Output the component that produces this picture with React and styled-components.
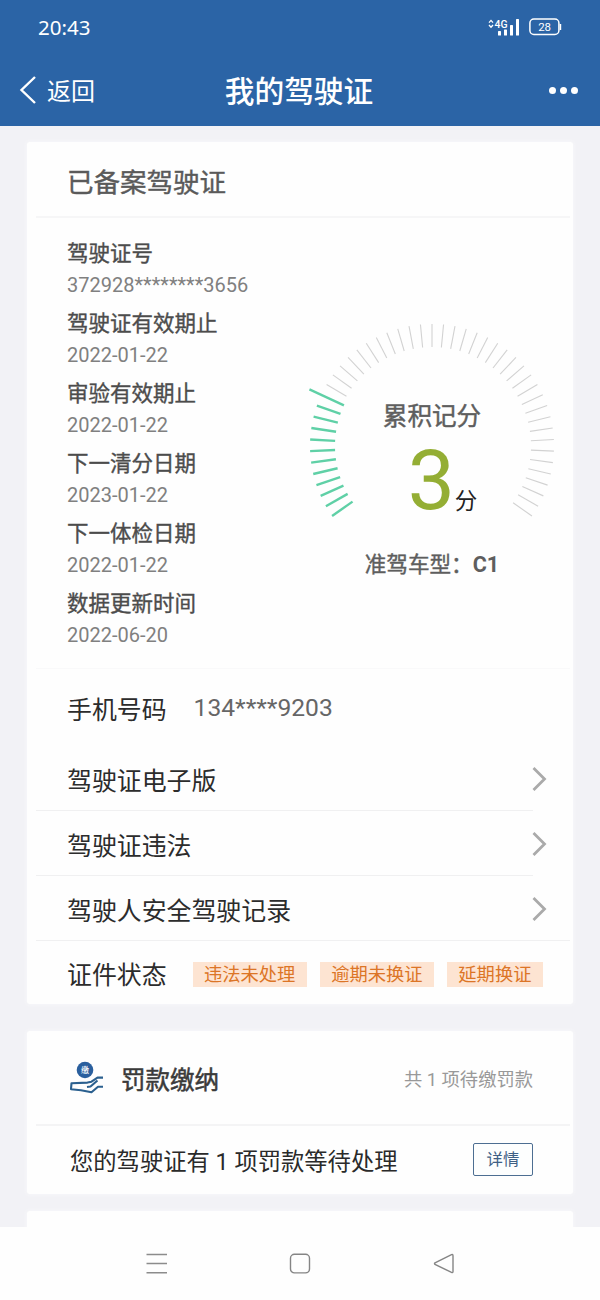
import React from 'react';
import styled, { createGlobalStyle } from 'styled-components';

const GlobalStyle = createGlobalStyle`
  * {
    box-sizing: border-box;
  }
  body {
    margin: 0;
    background: #f2f2f6;
    font-family: Roboto, "Noto Sans CJK SC", sans-serif;
  }
`;

const Screen = styled.div`
  display: flex;
  flex-direction: column;
  width: 600px;
  height: 1300px;
  overflow: hidden;
  background: #f2f2f6;
`;

const Header = styled.header`
  height: 126px;
  flex: none;
  background: #2b64a6;
  color: #fff;
`;

const StatusBar = styled.div`
  display: flex;
  align-items: center;
  justify-content: space-between;
  height: 54px;
  padding: 0 38px;
`;

const Time = styled.span`
  font-family: "Noto Sans", sans-serif;
  font-size: 20.5px;
  line-height: 24px;
`;

const StatusIcons = styled.div`
  display: flex;
  align-items: center;
  gap: 9px;
`;

const TitleBar = styled.div`
  display: grid;
  grid-template-columns: 1fr auto 1fr;
  align-items: center;
  height: 72px;
  padding: 0 22px 0 19px;
`;

const Back = styled.div`
  display: flex;
  align-items: center;
  gap: 10px;
  font-size: 24px;
  line-height: 36px;
  span {
    padding-top: 3px;
  }
`;

const PageTitle = styled.h1`
  margin: 0;
  padding: 4px 0 0 1px;
  font-size: 29.7px;
  line-height: 40px;
  font-weight: 500;
`;

const More = styled.div`
  display: flex;
  justify-content: flex-end;
  gap: 4px;
`;

const Dot = styled.i`
  width: 7px;
  height: 7px;
  border-radius: 50%;
  background: #fff;
`;

const Content = styled.main`
  flex: 1;
  min-height: 0;
  overflow: hidden;
  padding: 16px 27px 0;
`;

const Card = styled.section`
  height: ${(p) => p.$height}px;
  margin-bottom: ${(p) => p.$gap || 0}px;
  background: #fefefe;
  border-radius: 3px;
  box-shadow: 0 0 4px #fafafc;
`;

const CardTitle = styled.h2`
  display: flex;
  align-items: center;
  height: 76px;
  margin: 0 3px 0 9px;
  padding: 2px 0 0 31px;
  border-bottom: 2px solid #f6f6f7;
  color: #5a5a5a;
  font-size: 26.5px;
  font-weight: 400;
  -webkit-text-stroke: 0.4px #5a5a5a;
`;

const Summary = styled.div`
  display: flex;
  height: 450px;
  margin: 0 3px 0 9px;
  padding: 19px 0 0 31px;
`;

const InfoList = styled.dl`
  flex: none;
  width: 233px;
  margin: 0;
`;

const InfoLabel = styled.dt`
  height: 33px;
  color: #4c4c4c;
  font-size: 21.5px;
  line-height: 34px;
  -webkit-text-stroke: 0.35px #4c4c4c;
  white-space: nowrap;
`;

const InfoValue = styled.dd`
  height: 37px;
  margin: 0;
  color: #808080;
  font-size: 20px;
  line-height: 31px;
`;

const ScorePanel = styled.div`
  display: flex;
  flex: none;
  flex-direction: column;
  align-items: center;
  width: 264px;
  padding-top: 67px;
`;

const Gauge = styled.div`
  display: grid;
  width: 264px;
  height: 230px;
  & > * {
    grid-area: 1 / 1;
  }
`;

const ScoreText = styled.div`
  display: flex;
  flex-direction: column;
  align-items: center;
  padding-top: 95px;
`;

const ScoreLabel = styled.div`
  color: #5e5e5e;
  font-size: 24.6px;
  line-height: 36px;
  -webkit-text-stroke: 0.45px #5e5e5e;
`;

const Score = styled.div`
  display: flex;
  align-items: baseline;
  padding-left: 21px;
  color: #94ae34;
  font-size: 84px;
  line-height: 92px;
`;

const Unit = styled.span`
  color: #222;
  font-size: 22.5px;
  line-height: 30px;
`;

const VehicleType = styled.div`
  margin-top: 14px;
  color: #5e5e5e;
  font-size: 21.6px;
  line-height: 34px;
  -webkit-text-stroke: 0.4px #5e5e5e;
  white-space: nowrap;
  b {
    font-weight: 700;
    -webkit-text-stroke: 0;
  }
`;

const Row = styled.div`
  display: flex;
  align-items: center;
  height: ${(p) => p.$height || 65}px;
  margin: 0 ${(p) => (p.$short ? 40 : 3)}px 0 9px;
  padding-left: 31px;
  border-bottom: ${(p) => (p.$last ? 0 : 1)}px solid #f0f0f1;
  color: #2c2c2c;
  font-size: 24.9px;
  white-space: nowrap;
`;

const PhoneRow = styled(Row)`
  border-top: 1px solid #f9f9fa;
`;

const RowText = styled.span`
  flex: 1;
  padding-top: 1px;
`;

const Chevron = styled.svg`
  flex: none;
  margin: 2px ${(p) => (p.$short ? -14 : 23)}px 0 0;
`;

const Phone = styled.span`
  margin-left: 27px;
  color: #666;
  font-size: 24.6px;
`;

const Tags = styled.div`
  display: flex;
  gap: 13px;
  margin: 3px 0 0 26px;
`;

const Tag = styled.span`
  height: 25px;
  padding: 0 11.4px;
  background: #fde4d2;
  color: #dc7526;
  font-size: 18.3px;
  line-height: 26px;
`;

const FineHeader = styled.div`
  display: flex;
  align-items: center;
  height: 95px;
  margin: 0 3px 0 9px;
  padding: 0 37px 0 33px;
  border-bottom: 2px solid #f4f4f5;
`;

const FineTitle = styled.h2`
  flex: 1;
  margin: 1px 0 0 16px;
  color: #3a3a3a;
  font-size: 24.5px;
  font-weight: 400;
  -webkit-text-stroke: 0.5px #3a3a3a;
`;

const FineCount = styled.span`
  color: #999;
  font-size: 18.3px;
`;

const FineRow = styled.div`
  display: flex;
  align-items: center;
  justify-content: space-between;
  height: 67px;
  padding: 0 40px 0 43px;
  color: #2a2a2a;
  font-size: 23.3px;
`;

const DetailButton = styled.button`
  width: 60px;
  height: 33px;
  padding: 0;
  border: 1px solid #4d6e92;
  border-radius: 2px;
  background: #fdfefe;
  color: #3f6085;
  font-family: inherit;
  font-size: 16.4px;
  line-height: 31px;
`;

const NavBar = styled.nav`
  display: flex;
  flex: none;
  align-items: center;
  justify-content: center;
  gap: 122px;
  height: 73px;
  background: #fefefe;
`;

const infos = [
  ['驾驶证号', '372928********3656'],
  ['驾驶证有效期止', '2022-01-22'],
  ['审验有效期止', '2022-01-22'],
  ['下一清分日期', '2023-01-22'],
  ['下一体检日期', '2022-01-22'],
  ['数据更新时间', '2022-06-20'],
];

const menus = ['驾驶证电子版', '驾驶证违法', '驾驶人安全驾驶记录'];

const states = ['违法未处理', '逾期未换证', '延期换证'];

const TICKS = 47;
const ACTIVE = 12;

// 47 ticks over a 250 degree arc, the last active one sticks out
const GaugeTicks = () => (
  <svg width="264" height="230" viewBox="0 0 264 230" overflow="visible">
    {Array.from({ length: TICKS }, (_, i) => {
      const a = ((-215 + (i * 250) / (TICKS - 1)) * Math.PI) / 180;
      const active = i < ACTIVE;
      const outer = i === ACTIVE - 1 ? 135 : 122;
      const inner = active ? 97 : 99;
      return (
        <line
          key={i}
          x1={132 + Math.cos(a) * inner}
          y1={142 + Math.sin(a) * inner}
          x2={132 + Math.cos(a) * outer}
          y2={142 + Math.sin(a) * outer}
          stroke={active ? '#5fd0a6' : '#d2d2d2'}
          strokeWidth={active ? 2.4 : 1.1}
        />
      );
    })}
  </svg>
);

const SignalIcon = () => (
  <svg width="32" height="19" viewBox="0 0 32 19" fill="#fff">
    <path d="M1 4.600L3 2.400L5 4.600M1 7L3 9.200L5 7" fill="none" stroke="#fff" strokeWidth="1.300" />
    <text x="6.500" y="9.800" fontSize="11.500" fontWeight="500" fontFamily="Roboto, sans-serif" textLength="13" lengthAdjust="spacingAndGlyphs">4G</text>
    <rect x="10" y="13" width="3" height="4.500" rx="0.600" />
    <rect x="16" y="11.500" width="3" height="6" rx="0.600" />
    <rect x="22" y="7" width="3" height="10.500" rx="0.600" />
    <rect x="28" y="1" width="3" height="16.500" rx="0.600" />
  </svg>
);

const BatteryIcon = () => (
  <svg width="33" height="18" viewBox="0 0 33 18">
    <rect x="0.900" y="1.100" width="29" height="15.400" rx="4" fill="none" stroke="#fff" strokeWidth="1.500" />
    <path d="M31.400 6v6" stroke="#fff" strokeWidth="1.600" />
    <text x="15.600" y="13" fill="#fff" fontSize="11.500" fontFamily="Roboto, sans-serif" textAnchor="middle">28</text>
  </svg>
);

const PayIcon = () => (
  <svg width="36" height="34" viewBox="0 0 36 34">
    <circle cx="16" cy="9" r="8.300" fill="#2a5f9e" />
    <text x="16" y="12" fill="#fff" fontSize="8" fontWeight="500" fontFamily="Noto Sans CJK SC, sans-serif" textAnchor="middle">缴</text>
    <path
      d="M34 16.600H28.500L22.500 20.700L18.500 21.600L2.500 22.200L2 28.200L12 29.200L22.500 31.200L29 25.700H34M18 26L21.500 25.500L28.500 19.500"
      fill="none"
      stroke="#2b608f"
      strokeWidth="2.100"
      strokeLinejoin="round"
    />
  </svg>
);

const App = () => {
  return (
    <Screen>
      <GlobalStyle />
      <Header>
        <StatusBar>
          <Time>20:43</Time>
          <StatusIcons>
            <SignalIcon />
            <BatteryIcon />
          </StatusIcons>
        </StatusBar>
        <TitleBar>
          <Back>
            <svg width="18" height="30" viewBox="0 0 18 30">
              <path d="M16 2L2.500 15L16 28" fill="none" stroke="#fff" strokeWidth="2.400" />
            </svg>
            <span>返回</span>
          </Back>
          <PageTitle>我的驾驶证</PageTitle>
          <More>
            <Dot />
            <Dot />
            <Dot />
          </More>
        </TitleBar>
      </Header>
      <Content>
        <Card $height={862} $gap={27}>
          <CardTitle>已备案驾驶证</CardTitle>
          <Summary>
            <InfoList>
              {infos.map(([label, value]) => (
                <React.Fragment key={label}>
                  <InfoLabel>{label}</InfoLabel>
                  <InfoValue>{value}</InfoValue>
                </React.Fragment>
              ))}
            </InfoList>
            <ScorePanel>
              <Gauge>
                <GaugeTicks />
                <ScoreText>
                  <ScoreLabel>累积记分</ScoreLabel>
                  <Score>
                    3<Unit>分</Unit>
                  </Score>
                </ScoreText>
              </Gauge>
              <VehicleType>
                准驾车型：<b>C1</b>
              </VehicleType>
            </ScorePanel>
          </Summary>
          <PhoneRow $height={78} $last>
            手机号码
            <Phone>134****9203</Phone>
          </PhoneRow>
          {menus.map((name, i) => (
            <Row key={name} $short={i < 2}>
              <RowText>{name}</RowText>
              <Chevron $short={i < 2} width="15" height="26" viewBox="0 0 15 26">
                <path d="M1.500 2L12.500 13L1.500 24" fill="none" stroke="#aaa" strokeWidth="2.800" />
              </Chevron>
            </Row>
          ))}
          <Row $height={63} $last>
            证件状态
            <Tags>
              {states.map((s) => (
                <Tag key={s}>{s}</Tag>
              ))}
            </Tags>
          </Row>
        </Card>
        <Card $height={163} $gap={17}>
          <FineHeader>
            <PayIcon />
            <FineTitle>罚款缴纳</FineTitle>
            <FineCount>共 1 项待缴罚款</FineCount>
          </FineHeader>
          <FineRow>
            <span>您的驾驶证有 1 项罚款等待处理</span>
            <DetailButton>详情</DetailButton>
          </FineRow>
        </Card>
        <Card $height={120} />
      </Content>
      <NavBar>
        <svg width="22" height="22" viewBox="0 0 22 22">
          <path d="M1.500 1.500H22M1.500 10.500H22M1.500 19.700H22" stroke="#8c8c8c" strokeWidth="1.400" />
        </svg>
        <svg width="22" height="22" viewBox="0 0 22 22">
          <rect x="1.500" y="1.300" width="19" height="18.600" rx="4" fill="none" stroke="#858585" strokeWidth="1.400" />
        </svg>
        <svg width="22" height="22" viewBox="0 0 22 22">
          <path d="M18.500 1.600Q20 1 20 2.700V18.500Q20 20 18.500 19.400L2 11.400Q1 10.500 2 9.800Z" fill="none" stroke="#858585" strokeWidth="1.400" />
        </svg>
      </NavBar>
    </Screen>
  );
};

export default App;
